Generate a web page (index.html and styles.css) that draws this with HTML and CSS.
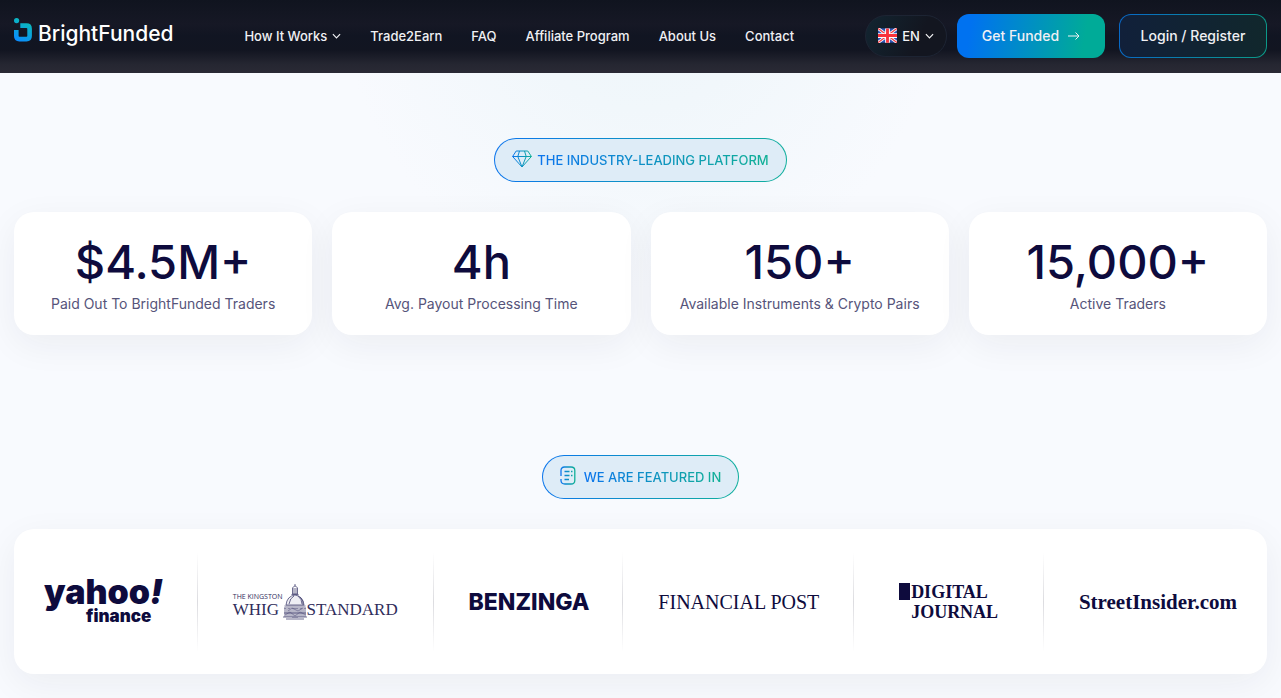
FILE: index.html
```html
<!DOCTYPE html>
<html lang="en">
<head>
<meta charset="utf-8">
<meta name="viewport" content="width=device-width, initial-scale=1">
<title>BrightFunded</title>
<link rel="stylesheet" href="styles.css">
</head>
<body>
<svg class="defs" width="0" height="0" aria-hidden="true">
  <defs>
    <linearGradient id="brand" x1="0" y1="0" x2="1" y2="0"><stop offset="0" stop-color="#0b74ee"/><stop offset="1" stop-color="#10b096"/></linearGradient>
    <linearGradient id="mark" gradientUnits="userSpaceOnUse" x1="2" y1="22" x2="12" y2="4"><stop offset="0" stop-color="#0a8cff"/><stop offset="1" stop-color="#0bb8bd"/></linearGradient>
  </defs>
</svg>
<header class="header">
  <a class="brand" href="#">
    <svg class="brand-mark" viewBox="0 0 18 24" aria-hidden="true">
      <circle cx="2.6" cy="2.6" r="2.6" fill="url(#mark)"/>
      <path d="M6.3 7.6H12.5Q15.6 7.6 15.6 10.7V18Q15.6 21.1 12.5 21.1H5.4Q2.3 21.1 2.3 18V12" fill="none" stroke="url(#mark)" stroke-width="4.6"/>
    </svg>
    <span class="brand-name">BrightFunded</span>
  </a>
  <nav class="nav">
    <a href="#">How It Works
      <svg class="chevron" viewBox="0 0 10 6" aria-hidden="true"><path d="M1 1l4 4 4-4"/></svg>
    </a>
    <a href="#">Trade2Earn</a>
    <a href="#">FAQ</a>
    <a href="#">Affiliate Program</a>
    <a href="#">About Us</a>
    <a href="#">Contact</a>
  </nav>
  <div class="actions">
    <button class="lang" type="button">
      <svg class="flag" viewBox="0 0 20 15" aria-hidden="true">
        <path fill="#2f55b5" d="M0 0h20v15H0z"/>
        <path stroke="#fff" stroke-width="3" d="M0 0l20 15M20 0L0 15"/>
        <path stroke="#f0434a" stroke-width="1.3" d="M0 0l20 15M20 0L0 15"/>
        <path stroke="#fff" stroke-width="5" d="M10 0v15M0 7.5h20"/>
        <path stroke="#f8323c" stroke-width="3" d="M10 0v15M0 7.5h20"/>
      </svg>
      EN
      <svg class="chevron" viewBox="0 0 10 6" aria-hidden="true"><path d="M1 1l4 4 4-4"/></svg>
    </button>
    <a class="button button-primary" href="#">Get Funded
      <svg class="arrow" viewBox="0 0 12 10" aria-hidden="true"><path d="M0 5h11M7.5 1.5L11 5 7.500 8.500"/></svg>
    </a>
    <a class="button button-outline" href="#">Login / Register</a>
  </div>
</header>
<main class="main">
  <section class="section">
    <h2 class="badge">
      <svg class="badge-icon badge-gem" viewBox="0 0 20 18" aria-hidden="true">
        <path fill="none" stroke="url(#brand)" d="M4.200 1H15.800L19.400 6.500 10 17 .6 6.500zM.6 6.500H19.400M7.500 1L5.800 6.500 10 17 14.200 6.500 12.500 1"/>
      </svg>
      <span class="badge-text">THE INDUSTRY-LEADING PLATFORM</span>
    </h2>
    <div class="stats">
      <article class="stat"><strong>$4.5M+</strong><p>Paid Out To BrightFunded Traders</p></article>
      <article class="stat"><strong>4h</strong><p>Avg. Payout Processing Time</p></article>
      <article class="stat"><strong>150+</strong><p>Available Instruments &amp; Crypto Pairs</p></article>
      <article class="stat"><strong>15,000+</strong><p>Active Traders</p></article>
    </div>
  </section>
  <section class="section">
    <h2 class="badge badge-wide">
      <svg class="badge-icon badge-list" viewBox="0 0 16 19" aria-hidden="true">
        <path fill="none" stroke="url(#brand)" stroke-width="1.300" d="M1 10V4.500Q1 1 4.500 1H11Q14.800 1 14.800 4.500V14.500Q14.800 18 11 18H5Q1 18 1 14.500V13M4.500 5.500H9.500M11 5.500h1.500M4.500 9.500H9.500M11 9.500h1.500M4.500 13.500H9"/>
      </svg>
      <span class="badge-text">WE ARE FEATURED IN</span>
    </h2>
    <div class="press">
      <div class="yahoo"><span class="yahoo-top">yahoo<i>!</i></span><span class="yahoo-sub">finance</span></div>
      <span class="rule"></span>
      <div class="whig">
        <div class="whig-left"><small>THE KINGSTON</small><span>WHIG</span></div>
        <svg class="dome" viewBox="0 0 24 36" aria-hidden="true">
          <g fill="none" stroke="#494775" stroke-width=".8">
            <path d="M12 0v2M9.500 4Q12 0 14.500 4V10H9.500zM11 4v6M13 4v6M8.500 10.500h7"/>
            <path d="M3 21Q4 12 12 11Q20 12 21 21z" fill="#eeeef4"/>
            <path d="M6 20Q7 14 11 12M15 12q4 3 4 8M17 13q4 4 3 8"/>
            <path d="M1.500 22h21M1 24h22M2 24v9M4 25v8M6 24v9M8 25v8M10 24v10M12 24v10M14 24v10M16 25v8M18 24v9M20 25v8M22 24v9M1 29h22M0 33h24M3 35h18"/>
            <path d="M5 27l4-3 6 3 5-3M2 31l5-3 5 4 5-4 6 3" opacity=".6"/>
          </g>
        </svg>
        <span class="whig-right">STANDARD</span>
      </div>
      <span class="rule"></span>
      <div class="benzinga">BENZINGA</div>
      <span class="rule"></span>
      <div class="post">FINANCIAL POST</div>
      <span class="rule"></span>
      <div class="journal"><span class="journal-block"></span><span>DIGITAL<br>JOURNAL</span></div>
      <span class="rule"></span>
      <div class="street">StreetInsider.com</div>
    </div>
  </section>
</main>
</body>
</html>
```
FILE: styles.css
```css
* { box-sizing: border-box; }
body {
  margin: 0;
  min-height: 100vh;
  font-family: Inter, "Open Sans", sans-serif;
  color: #0e0b3d;
  background: radial-gradient(circle at 50% -10px, #edf6fa 0, #f1f7fb 120px, #f8fafe 300px) #f8fafe;
}
.defs { position: absolute; }
a { color: inherit; text-decoration: none; }
h2, p { margin: 0; }

.header {
  position: sticky;
  top: 0;
  z-index: 2;
  display: flex;
  align-items: center;
  justify-content: space-between;
  height: 73px;
  padding: 0 14px 2px;
  color: #f0f0f4;
  background: linear-gradient(#10141f 0, #161825 24px, #111522 36px, #121521 50px, #252631 64px, #2a2a35 100%);
}
.brand { display: flex; align-items: flex-start; gap: 6px; padding-bottom: 6px; }
.brand-mark { width: 18px; height: 24px; }
.brand-name { font-size: 21px; font-weight: 500; line-height: 28px; padding-top: 2px; color: #fff; }
.nav { display: flex; gap: 29px; font-size: 13px; font-weight: 500; line-height: 20px; white-space: nowrap; }
.nav a { display: flex; align-items: center; gap: 5px; }
.chevron { width: 9px; height: 6px; fill: none; stroke: currentColor; stroke-width: 1.3; }
.actions { display: flex; align-items: center; white-space: nowrap; }
.lang {
  display: flex;
  align-items: center;
  justify-content: center;
  gap: 5px;
  width: 82px;
  height: 42px;
  margin-right: 10px;
  padding: 0;
  border: 1px solid #1d2433;
  border-radius: 21px;
  font: 500 13px/20px Inter, sans-serif;
  color: #f4f4f6;
  background: linear-gradient(115deg, #122531, #131620 65%);
}
.flag { width: 19px; height: 15px; }
.button {
  display: flex;
  align-items: center;
  justify-content: center;
  gap: 9px;
  width: 148px;
  height: 44px;
  border: 1px solid transparent;
  border-radius: 12px;
  font-size: 14px;
  font-weight: 500;
  line-height: 20px;
}
.button-primary {
  margin-right: 14px;
  background: linear-gradient(100deg, #0072f0 10%, #00ab98 85%) border-box;
}
.button-outline {
  background:
    linear-gradient(90deg, #11203a, #11272c) padding-box,
    linear-gradient(100deg, #0868c8, #0b9b88) border-box;
}
.arrow { width: 12px; height: 10px; fill: none; stroke: currentColor; }

.main { display: grid; gap: 120px; padding: 65px 14px 24px; }
.section { display: grid; gap: 30px; }
.badge {
  display: flex;
  align-items: center;
  justify-self: center;
  gap: 5px;
  height: 44px;
  padding: 0 17px;
  border: 1px solid transparent;
  border-radius: 22px;
  background:
    linear-gradient(#deecf7, #deecf7) padding-box,
    linear-gradient(100deg, #0b74ee, #10b09c) border-box;
  font-size: 13px;
  font-weight: 500;
  line-height: 20px;
}
.badge-wide { gap: 8px; }
.badge-icon { margin-bottom: 3px; }
.badge-gem { width: 20px; height: 18px; }
.badge-list { width: 16px; height: 19px; }
.badge-text {
  color: transparent;
  background: linear-gradient(90deg, #0b74ee, #10b096);
  background-clip: text;
  -webkit-background-clip: text;
}
.stats { display: grid; grid-template-columns: repeat(4, 1fr); gap: 20px; }
.stat, .press {
  border-radius: 20px;
  background: #fff;
  box-shadow: 0 10px 36px rgba(30, 30, 45, .06);
}
.stat { padding: 20px 16px; text-align: center; }
.stat strong { display: block; font-size: 47px; font-weight: 500; line-height: 60px; }
.stat p { font-size: 14px; line-height: 23px; color: #56547a; }

.press {
  display: flex;
  align-items: center;
  justify-content: space-between;
  min-height: 145px;
  padding: 0 30px;
  white-space: nowrap;
}
.rule { width: 1px; height: 100px; background: linear-gradient(transparent, #dcdce0, transparent); }
.yahoo { display: flex; flex-direction: column; width: 118px; font-weight: 900; }
.yahoo-top { font-size: 34px; line-height: 28px; }
.yahoo-sub { padding-left: 42px; font-size: 17px; line-height: 20px; }
.whig { display: flex; align-items: flex-end; width: 165px; color: #302d5b; font: 17px/20px "Liberation Serif", serif; }
.whig-left { display: flex; flex-direction: column; }
.whig small { font: 7px/6px "Open Sans", sans-serif; }
.dome { width: 24px; height: 36px; }
.benzinga { width: 119px; font-size: 23px; font-weight: 800; line-height: 28px; }
.post { width: 160px; font: 20px/28px "Liberation Serif", serif; }
.journal { display: flex; width: 119px; padding-left: 10px; font: bold 18px/20px "Liberation Serif", serif; }
.journal-block { width: 11px; height: 17px; margin: 1px 1px 0 0; background: #0e0b3d; }
.street { width: 158px; font: bold 21px/28px "Liberation Serif", serif; }
```
